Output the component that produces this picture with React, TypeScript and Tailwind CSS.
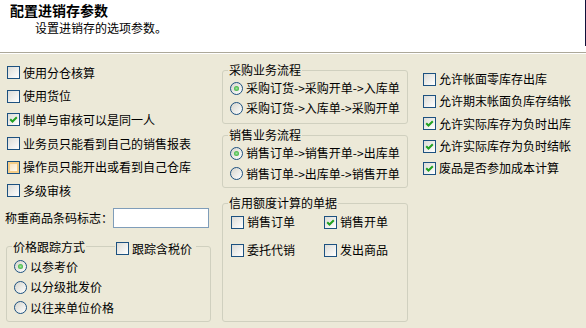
import type { ReactNode } from "react";

type BoxProps = { checked?: boolean; hot?: boolean };

// XP style check box
function CheckBox({ checked = false, hot = false }: BoxProps) {
  return (
    <span className="relative flex h-[13px] w-[13px] shrink-0 items-center justify-center border border-[#1c5180] bg-linear-to-br from-[#dcdcd7] to-white">
      {hot && (
        <span className="absolute inset-0 border-2 border-[#f6cd86] bg-linear-to-br from-[#fbe3bd] to-[#fffaf2]" />
      )}
      {checked && (
        <svg width="11" height="11" viewBox="0 0 11 11" className="relative">
          <path d="M2.2 5.2 L4.5 7.5 L8.8 3.2" fill="none" stroke="#21a121" strokeWidth="2" />
        </svg>
      )}
    </span>
  );
}

function RadioDot({ on = false }: { on?: boolean }) {
  return (
    <span className="flex h-[13px] w-[13px] shrink-0 items-center justify-center rounded-full border border-[#1c5180] bg-linear-to-br from-[#d6d5cd] to-white">
      {on && (
        <span className="h-[5px] w-[5px] rounded-full bg-[radial-gradient(circle,#9be59b,#21a121)]" />
      )}
    </span>
  );
}

function Check({
  label,
  checked,
  hot,
  className = "",
}: {
  label: string;
  checked?: boolean;
  hot?: boolean;
  className?: string;
}) {
  return (
    <label className={`flex items-center gap-[3px] ${className}`}>
      <CheckBox checked={checked} hot={hot} />
      <span>{label}</span>
    </label>
  );
}

function Radio({ label, on, className = "" }: { label: string; on?: boolean; className?: string }) {
  return (
    <label className={`flex items-center gap-[3px] ${className}`}>
      <RadioDot on={on} />
      <span>{label}</span>
    </label>
  );
}

function Group({
  legend,
  className = "",
  children,
}: {
  legend: ReactNode;
  className?: string;
  children: ReactNode;
}) {
  return (
    <fieldset className={`rounded-[3px] border border-[#d0d0bf] ${className}`}>
      <legend className="ml-[5px] px-[1px] leading-[14px]">{legend}</legend>
      {children}
    </fieldset>
  );
}

const leftChecks = [
  { label: "使用分仓核算" },
  { label: "使用货位" },
  { label: "制单与审核可以是同一人", checked: true },
  { label: "业务员只能看到自己的销售报表" },
  { label: "操作员只能开出或看到自己仓库", hot: true },
  { label: "多级审核" },
];

const rightChecks = [
  { label: "允许帐面零库存出库" },
  { label: "允许期末帐面负库存结帐" },
  { label: "允许实际库存为负时出库", checked: true },
  { label: "允许实际库存为负时结帐", checked: true },
  { label: "废品是否参加成本计算", checked: true },
];

export default function App() {
  return (
    <div className="h-[328px] w-[586px] overflow-hidden bg-[#ece9d8] font-['Noto_Sans_CJK_SC',sans-serif] text-[12px] text-black">
      {/* Header */}
      <div className="flex h-[53px] border-b border-[#aca899] bg-white">
        <div className="flex-1 pl-[10px] pt-[1px]">
          <div className="text-[14px] font-bold leading-[18px]">配置进销存参数</div>
          <div className="mt-[1px] pl-[25px] leading-[15px]">设置进销存的选项参数。</div>
        </div>
        <div className="h-[46px] w-px bg-[#10103a]" />
      </div>
      <div className="h-px bg-white" />

      <div className="flex pl-[5px]">
        {/* Left column */}
        <div className="w-[207px] pt-[7px]">
          {leftChecks.map((c) => (
            <Check key={c.label} {...c} className="h-[23.6px] pl-[2px]" />
          ))}
          <div className="mt-[5px] flex h-[20px] items-center">
            <span className="w-[108px]">称重商品条码标志：</span>
            <input className="h-[20px] w-[96px] border border-[#7f9db9] bg-white outline-none" />
          </div>
          <Group
            className="ml-[1px] mt-[12px] h-[82px] w-[205px]"
            legend={
              <span className="flex items-center">
                <span>价格跟踪方式</span>
                <span className="mx-[1px] h-px w-[29px] bg-[#d0d0bf]" />
                <span className="relative top-[2px] flex items-center gap-[3px] pr-[3px]">
                  <CheckBox />
                  <span>跟踪含税价</span>
                </span>
              </span>
            }
          >
            <div className="pl-[7px] pt-[3px]">
              <Radio label="以参考价" on className="h-[20.5px]" />
              <Radio label="以分级批发价" className="h-[20.5px]" />
              <Radio label="以往来单位价格" className="h-[20.5px]" />
            </div>
          </Group>
        </div>

        {/* Middle column */}
        <div className="ml-[10px] w-[186px] pt-[9px]">
          <Group legend="采购业务流程" className="h-[61px]">
            <div className="pl-[7px] pt-[1px]">
              <Radio label="采购订货->采购开单->入库单" on className="h-[20px]" />
              <Radio label="采购订货->入库单->采购开单" className="h-[20px]" />
            </div>
          </Group>
          <Group legend="销售业务流程" className="mt-[4px] h-[60px]">
            <div className="pl-[7px] pt-[1px]">
              <Radio label="销售订单->销售开单->出库单" on className="h-[20px]" />
              <Radio label="销售订单->出库单->销售开单" className="h-[21px]" />
            </div>
          </Group>
          <Group legend="信用额度计算的单据" className="mt-[8px] h-[126px]">
            <div className="grid grid-cols-[93px_1fr] gap-y-[8px] pl-[8px] pt-[2px]">
              <Check label="销售订单" className="h-[20px]" />
              <Check label="销售开单" checked className="h-[20px]" />
              <Check label="委托代销" className="h-[20px]" />
              <Check label="发出商品" className="h-[20px]" />
            </div>
          </Group>
        </div>

        {/* Right column */}
        <div className="ml-[15px] flex-1 pt-[14px]">
          {rightChecks.map((c) => (
            <Check key={c.label} {...c} className="h-[22.3px] gap-[2px]" />
          ))}
        </div>
      </div>
    </div>
  );
}
